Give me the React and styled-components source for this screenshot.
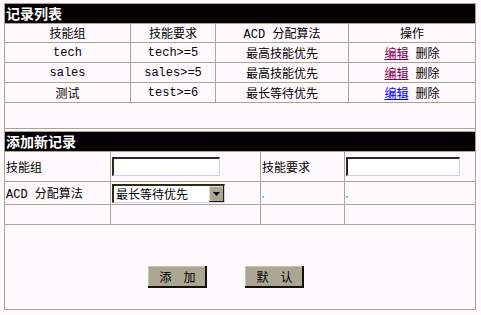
import React from "react";
import styled, { createGlobalStyle } from "styled-components";

const Global = createGlobalStyle`
  body {
    margin: 0;
    background: #fdf9fd;
    font-family: "Liberation Mono", "Noto Sans CJK SC", monospace;
    font-size: 12px;
    color: #000;
  }
`;

const line = "#aca493";

const Frame = styled.div`
  margin: 3px 0 0 4px;
  width: 472px;
  border-left: 1px solid ${line};
  border-right: 1px solid ${line};
  box-sizing: border-box;
`;

const Section = styled.div`
  display: grid;
  grid-template-columns: ${(p) => p.$cols};
  gap: 1px;
  background: ${line};
  border-top: 1px solid ${line};
  border-bottom: 1px solid ${line};
  margin-top: ${(p) => p.$top || 0}px;
`;

const TitleBar = styled.div`
  grid-column: 1 / -1;
  height: ${(p) => p.$h}px;
  background: #020002;
  color: #fff;
  font-family: "Noto Sans CJK SC", sans-serif;
  font-weight: 700;
  font-size: 14px;
  line-height: ${(p) => p.$h}px;
  padding-left: 1px;
`;

const Cell = styled.div`
  background: #fdf9fd;
  height: ${(p) => p.$h}px;
  display: flex;
  align-items: center;
  justify-content: ${(p) => (p.$left ? "flex-start" : "center")};
  padding-left: ${(p) => (p.$left ? 1 : 0)}px;
  white-space: pre;
  position: relative;
`;

const Wide = styled(Cell)`
  grid-column: 1 / -1;
`;

const EditLink = styled.a`
  color: ${(p) => (p.$visited ? "#800050" : "#0000ff")};
  text-decoration: underline;
  cursor: pointer;
`;

const TextBox = styled.input`
  box-sizing: border-box;
  width: ${(p) => p.$w}px;
  height: 19px;
  margin: 0;
  padding: 0 2px;
  background: #fff;
  border-style: solid;
  border-width: 2px 1px 1px 2px;
  border-color: #2a2a1c #d0ccf4 #d0ccf4 #2a2a1c;
  outline: none;
`;

const FakeSelect = styled.div`
  box-sizing: border-box;
  width: 113px;
  height: 19px;
  display: flex;
  align-items: center;
  background: #fff;
  border-style: solid;
  border-width: 2px 1px 1px 2px;
  border-color: #2a2a1c #d0ccf4 #d0ccf4 #2a2a1c;
  font-family: "Noto Sans CJK SC", sans-serif;
  font-size: 12px;
  padding-left: 2px;
`;

const SelectText = styled.span`
  flex: 1;
`;

const DropBtn = styled.span`
  width: 15px;
  height: 16px;
  background: #aca592;
  box-shadow: inset -1px -1px 0 #202018, inset 1px 1px 0 #e4e0d0;
  display: flex;
  align-items: center;
  justify-content: center;
`;

const Dot = styled.span`
  position: absolute;
  left: 1px;
  top: 14px;
  width: 2px;
  height: 2px;
  background: #30e8f0;
`;

const ButtonRow = styled.div`
  display: flex;
  gap: 38px;
  padding: 41px 0 0 142px;
  align-self: flex-start;
`;

const Btn = styled.button`
  width: 59px;
  height: 22px;
  margin: 0;
  padding: 0 0 1px;
  background: #aca592;
  border: none;
  box-shadow: inset -2px -2px 0 #141008, inset 1px 1px 0 #c8c2b0;
  font-family: "Noto Sans CJK SC", sans-serif;
  font-size: 12px;
  color: #000;
`;

const rows = [
  { group: "tech", need: "tech>=5", algo: "最高技能优先", visited: true },
  { group: "sales", need: "sales>=5", algo: "最高技能优先", visited: true },
  { group: "测试", need: "test>=6", algo: "最长等待优先", visited: false },
];

export default function App() {
  return (
    <>
      <Global />
      <Frame>
        <Section $cols="125px 84px 132px 126px">
          <TitleBar $h={19}>记录列表</TitleBar>
          <Cell $h={18}>技能组</Cell>
          <Cell $h={18}>技能要求</Cell>
          <Cell $h={18}>ACD 分配算法</Cell>
          <Cell $h={18}>操作</Cell>
          {rows.map((r) => (
            <React.Fragment key={r.group}>
              <Cell $h={19}>{r.group}</Cell>
              <Cell $h={19}>{r.need}</Cell>
              <Cell $h={19}>{r.algo}</Cell>
              <Cell $h={19}>
                <EditLink $visited={r.visited}>编辑</EditLink> 删除
              </Cell>
            </React.Fragment>
          ))}
          <Wide $h={25} />
        </Section>
        <Section $cols="105px 149px 83px 130px" $top={2}>
          <TitleBar $h={19}>添加新记录</TitleBar>
          <Cell $h={29} $left>技能组</Cell>
          <Cell $h={29} $left>
            <TextBox $w={108} />
          </Cell>
          <Cell $h={29} $left>技能要求</Cell>
          <Cell $h={29} $left>
            <TextBox $w={114} />
          </Cell>
          <Cell $h={22} $left>ACD 分配算法</Cell>
          <Cell $h={22} $left>
            <FakeSelect>
              <SelectText>最长等待优先</SelectText>
              <DropBtn>
                <svg width="7" height="4" viewBox="0 0 7 4">
                  <path d="M0 0h7L3.5 4z" fill="#000" />
                </svg>
              </DropBtn>
            </FakeSelect>
          </Cell>
          <Cell $h={22} $left>
            <Dot />
          </Cell>
          <Cell $h={22} $left>
            <Dot />
          </Cell>
          <Cell $h={19} />
          <Cell $h={19} />
          <Cell $h={19} />
          <Cell $h={19} />
          <Wide $h={84} $left>
            <ButtonRow>
              <Btn>添　加</Btn>
              <Btn>默　认</Btn>
            </ButtonRow>
          </Wide>
        </Section>
      </Frame>
    </>
  );
}
